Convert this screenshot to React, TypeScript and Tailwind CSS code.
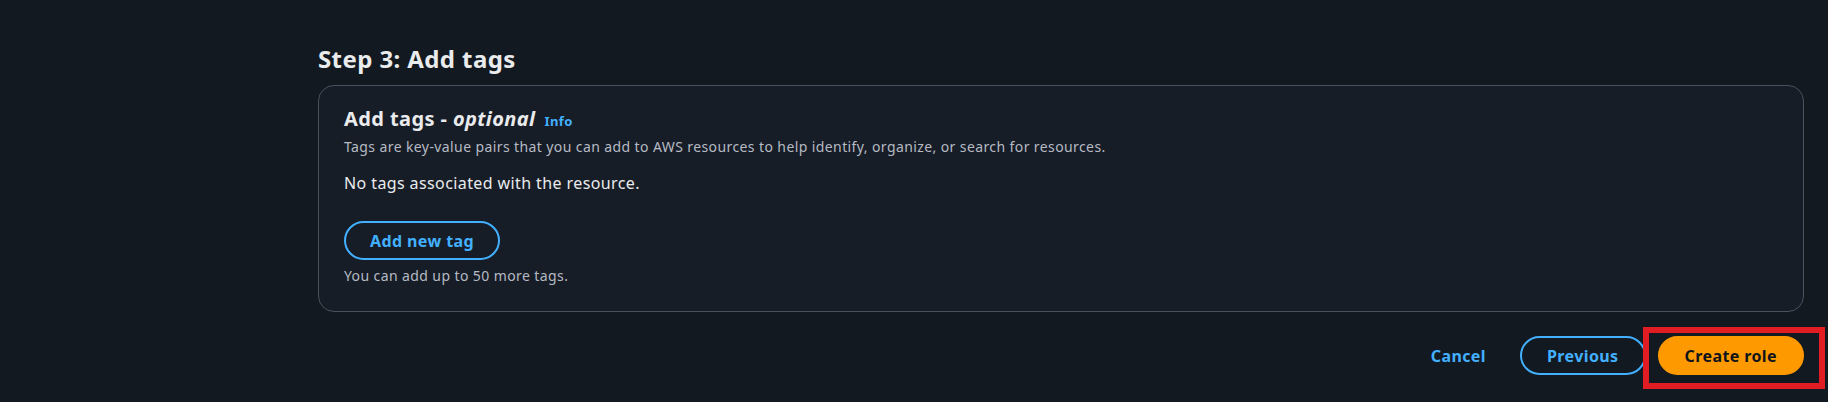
import { useState } from "react";

const tagLimit = 50;

function AddTagsCard() {
  const [tags] = useState<string[]>([]);

  return (
    <div className="rounded-[16px] border border-[#4a505c] bg-[#171d27] px-[25px] pt-[21px] pb-[25px]">
      <div className="flex items-baseline gap-[9px]">
        <h2 className="text-[20px] leading-[24px] font-bold text-[#e9ebed]">
          Add tags - <span className="italic">optional</span>
        </h2>
        <a className="text-[13px] leading-[16px] font-bold text-[#42b0ff]">Info</a>
      </div>
      <p className="mt-[6px] text-[14px] leading-[20px] text-[#b5bac3]">
        Tags are key-value pairs that you can add to AWS resources to help identify, organize, or search for resources.
      </p>

      {tags.length === 0 && (
        <p className="mt-[15px] text-[16px] leading-[22px] text-[#e9ebed]">No tags associated with the resource.</p>
      )}

      <button className="mt-[27px] h-[39px] rounded-full border-2 border-[#42b0ff] px-[24px] text-[16px] font-bold text-[#42b0ff]">
        Add new tag
      </button>
      <p className="mt-[6px] text-[14px] leading-[20px] text-[#b5bac3]">
        You can add up to {tagLimit - tags.length} more tags.
      </p>
    </div>
  );
}

export default function App() {
  return (
    <div
      className="min-h-[402px] w-full bg-[#131920] pl-[318px] pr-[24px] pt-[44px] tracking-[0.025em]"
      style={{ fontFamily: '"Noto Sans", "Open Sans", sans-serif' }}
    >
      <h1 className="mb-[11px] text-[24px] leading-[30px] font-bold text-[#e9ebed]">Step 3: Add tags</h1>

      <AddTagsCard />

      <div className="mt-[24px] flex items-center justify-end">
        <button className="h-[39px] px-[20px] text-[16px] font-bold text-[#42b0ff]">Cancel</button>
        <button className="ml-[14px] h-[39px] rounded-full border-2 border-[#42b0ff] px-[25px] text-[16px] font-bold text-[#42b0ff]">
          Previous
        </button>
        <div className="relative ml-[12px]">
          <button className="h-[39px] rounded-full border-2 border-[#ff9900] bg-[#ff9900] px-[25px] text-[16px] font-bold text-[#0f141a]">
            Create role
          </button>
          <div className="pointer-events-none absolute -top-[9px] -bottom-[14px] -left-[15px] -right-[21px] border-[6px] border-[#e11d23]" />
        </div>
      </div>
    </div>
  );
}
